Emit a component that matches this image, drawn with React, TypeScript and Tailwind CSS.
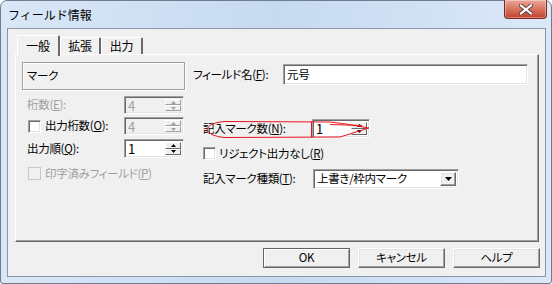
import React from "react";

const sunken =
  "border border-t-[#a0a0a0] border-l-[#a0a0a0] border-r-white border-b-white shadow-[inset_1px_1px_0_#696969,inset_-1px_-1px_0_#e3e3e3]";
const raised =
  "border border-t-white border-l-white border-r-[#696969] border-b-[#696969] shadow-[inset_-1px_-1px_0_#a0a0a0,inset_1px_1px_0_#e3e3e3]";

function U({ c }: { c: string }) {
  return <span className="underline underline-offset-[1px] decoration-1">{c}</span>;
}

function Tri({ up, disabled, big }: { up?: boolean; disabled?: boolean; big?: boolean }) {
  const col = disabled ? "#a0a0a0" : "#000";
  if (big)
    return (
      <svg width="7" height="4" viewBox="0 0 7 4">
        <path d="M0 0H7L3.5 4Z" fill={col} />
      </svg>
    );
  return (
    <svg width="5" height="3" viewBox="0 0 5 3">
      <path d={up ? "M2.5 0L5 3H0Z" : "M0 0H5L2.5 3Z"} fill={col} />
    </svg>
  );
}

function SpinBtn({ up, disabled }: { up?: boolean; disabled?: boolean }) {
  return (
    <div
      className={`flex-1 flex items-center justify-center bg-[#f0f0f0] border ${
        disabled
          ? "border-t-white border-l-white border-r-[#a0a0a0] border-b-[#a0a0a0]"
          : "border-t-white border-l-white border-r-[#696969] border-b-[#696969]"
      }`}
    >
      <Tri up={up} disabled={disabled} />
    </div>
  );
}

function Spin({ value, disabled, w = 60, h = 18 }: { value: string; disabled?: boolean; w?: number; h?: number }) {
  return (
    <div
      className={`flex ${sunken} p-[2px] ${disabled ? "bg-[#f0f0f0] text-[#a0a0a0]" : "bg-white text-black"}`}
      style={{ width: w, height: h }}
    >
      <div className="flex-1 pl-[1px] text-[13px] leading-[13px]">{value}</div>
      <div className="flex flex-col w-[16px]">
        <SpinBtn up disabled={disabled} />
        <SpinBtn disabled={disabled} />
      </div>
    </div>
  );
}

function Check({ disabled }: { disabled?: boolean }) {
  return (
    <div
      className={`w-[13px] h-[13px] shrink-0 border ${
        disabled
          ? "border-[#c8c8c8] bg-[#f0f0f0]"
          : "border-t-[#a0a0a0] border-l-[#a0a0a0] border-r-white border-b-white bg-white shadow-[inset_1px_1px_0_#696969,inset_-1px_-1px_0_#e3e3e3]"
      }`}
    />
  );
}

function Btn({ label, def }: { label: string; def?: boolean }) {
  return (
    <div
      className={`w-[87px] h-[20px] flex items-center justify-center bg-[#f0f0f0] ${
        def ? "border border-[#646464] shadow-[inset_1px_1px_0_#fff,inset_-1px_-1px_0_#a0a0a0]" : raised
      }`}
    >
      {label}
    </div>
  );
}

export default function App() {
  return (
    <div className="w-[552px] h-[284px] relative overflow-hidden bg-white font-['Noto_Sans_CJK_JP','Noto_Sans',sans-serif] text-[11.5px] tracking-[-0.3px] leading-none text-black [font-feature-settings:'palt']">
      <div className="w-full h-full flex flex-col border border-[#6f7d8c] rounded-t-[7px] rounded-b-[3px] bg-gradient-to-r from-[#d9e7f7] via-[#c6daf1] to-[#dbe8f8]">
        {/* title bar */}
        <div className="h-[27px] flex items-center pl-[7px] shrink-0 [font-feature-settings:normal] tracking-normal">
          <span className="text-[12px] pt-[1px]">フィールド情報</span>
        </div>

        {/* client */}
        <div className="ml-[6px] mr-[5px] flex-1 border border-[#8a97a6] bg-[#f0f0f0] flex flex-col">
          {/* tabs */}
          <div className="h-[25px] flex items-end pl-[9px] shrink-0 text-[12px]">
            <div className="relative z-10 -mb-[2px] w-[43px] h-[21px] bg-[#f0f0f0] border-l border-t border-white border-r-2 border-r-[#696969] rounded-t-[2px] flex items-start justify-center pt-[4px]">
              一般
            </div>
            <div className="w-[41px] h-[17px] border-t border-l border-white border-r-2 border-r-[#696969] rounded-t-[2px] flex items-start justify-center pt-[2px]">
              拡張
            </div>
            <div className="w-[42px] h-[17px] border-t border-l border-white border-r-2 border-r-[#696969] rounded-t-[2px] flex items-start justify-center pt-[2px]">
              出力
            </div>
          </div>

          {/* panel */}
          <div className="ml-[7px] w-[524px] h-[188px] shrink-0 border-l border-t border-white border-r border-b border-r-[#696969] border-b-[#696969] shadow-[inset_-1px_-1px_0_#a0a0a0] flex pl-[6px] pt-[7px] gap-[8px]">
            {/* left column */}
            <div className="w-[163px] flex flex-col">
              <div className="h-[28px] border border-[#a0a0a0] shadow-[1px_1px_0_#fff,inset_1px_1px_0_#fff] flex items-center pl-[4px]">
                マーク
              </div>
              <div className="mt-[6px] h-[18px] flex items-center justify-between pl-[5px] pr-[1px] text-[#a0a0a0]">
                <span>
                  桁数(<U c="E" />):
                </span>
                <Spin value="4" disabled />
              </div>
              <div className="mt-[3px] h-[18px] flex items-center justify-between pl-[6px] pr-[1px]">
                <span className="flex items-center gap-[4px]">
                  <Check />
                  <span>
                    出力桁数(<U c="O" />):
                  </span>
                </span>
                <Spin value="4" disabled />
              </div>
              <div className="mt-[4px] h-[19px] flex items-center justify-between pl-[5px] pr-[1px]">
                <span>
                  出力順(<U c="Q" />):
                </span>
                <Spin value="1" h={19} />
              </div>
              <div className="mt-[9px] h-[13px] flex items-center pl-[6px] gap-[4px] text-[#a0a0a0]">
                <Check disabled />
                <span>
                  印字済みフィールド(<U c="P" />)
                </span>
              </div>
            </div>

            {/* right column */}
            <div className="flex-1 flex flex-col">
              <div className="mt-[2px] h-[21px] flex items-center">
                <span className="w-[90px]">
                  フィールド名(<U c="F" />):
                </span>
                <div className={`w-[245px] h-[21px] bg-white ${sunken} flex items-center pl-[3px]`}>元号</div>
              </div>
              <div className="mt-[34px] h-[19px] flex items-center pl-[10px]">
                <span className="w-[109px]">
                  記入マーク数(<U c="N" />):
                </span>
                <Spin value="1" w={58} h={19} />
              </div>
              <div className="mt-[9px] h-[13px] flex items-center pl-[10px] gap-[3px]">
                <Check />
                <span>
                  リジェクト出力なし(<U c="R" />)
                </span>
              </div>
              <div className="mt-[9px] h-[20px] flex items-center pl-[10px]">
                <span className="w-[110px]">
                  記入マーク種類(<U c="T" />):
                </span>
                <div className={`w-[146px] h-[20px] bg-white ${sunken} flex items-center p-[2px]`}>
                  <span className="flex-1 pl-[1px]">上書き/枠内マーク</span>
                  <div className={`w-[16px] h-full bg-[#f0f0f0] ${raised} flex items-center justify-center`}>
                    <Tri big />
                  </div>
                </div>
              </div>
            </div>
          </div>

          {/* buttons */}
          <div className="mt-[6px] flex justify-end gap-[8px] pr-[5px]">
            <Btn label="OK" def />
            <Btn label="キャンセル" />
            <Btn label="ヘルプ" />
          </div>
        </div>
        <div className="h-[6px] shrink-0" />
      </div>

      {/* close button */}
      <div className="absolute top-0 right-[5px] w-[43px] h-[19px] rounded-b-[4px] border border-t-0 border-[#7a2a1e] bg-gradient-to-b from-[#eaa89a] via-[#d8745f] to-[#c0402a] shadow-[inset_0_0_0_1px_rgba(255,255,255,0.35)] flex items-center justify-center">
        <svg width="14" height="11" viewBox="0 0 14 11">
          <path d="M2 1.5L12 9.5M12 1.5L2 9.5" stroke="#5a3a36" strokeWidth="4" strokeLinecap="square" />
          <path d="M2 1.5L12 9.5M12 1.5L2 9.5" stroke="#fff" strokeWidth="2.2" strokeLinecap="square" />
        </svg>
      </div>

      {/* red annotation */}
      <svg className="absolute inset-0 pointer-events-none" width="552" height="284" viewBox="0 0 552 284">
        <g fill="none" stroke="#e8141c" strokeWidth="1">
          <path d="M224 121.5 Q208 123 207 130 Q210 136 224 137.5" />
          <path d="M224 121.5 L330 122 L346 124 L369 128" />
          <path d="M224 137.5 L340 137 L369 128" />
          <path d="M311.5 121.5 V137.5" />
          <path d="M330 124.5 L362 125.5" />
        </g>
      </svg>
    </div>
  );
}
